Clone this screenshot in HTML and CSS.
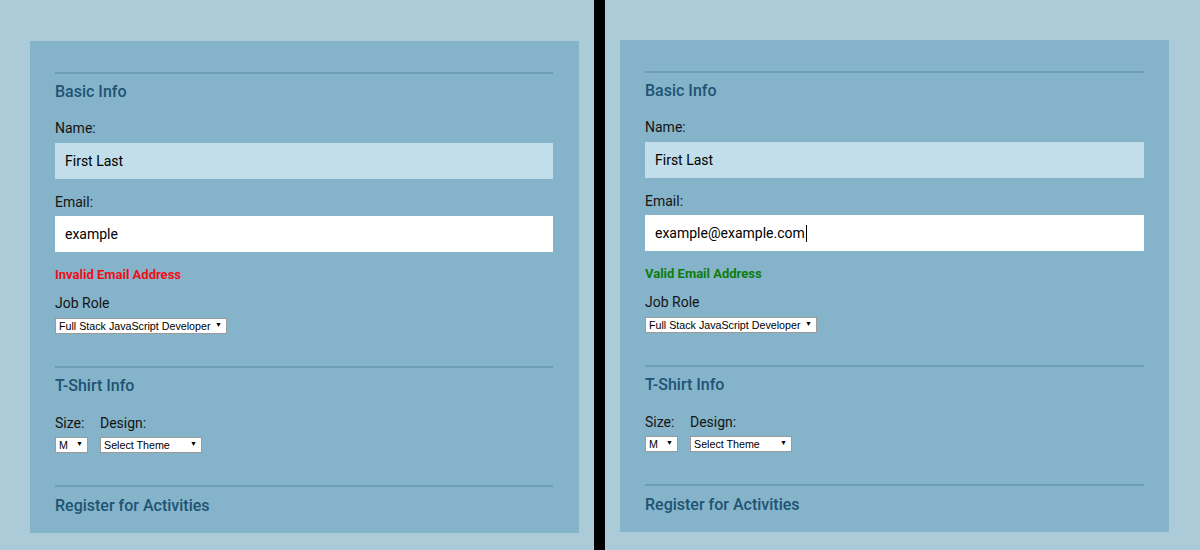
FILE: index.html
```html
<!DOCTYPE html>
<html lang="en">
<head>
<meta charset="utf-8">
<title>Form validation</title>
<link rel="stylesheet" href="styles.css">
</head>
<body>
<main class="split">
  <section class="panel panel-left">
    <form class="card">
      <fieldset class="group group-basic">
        <h2 class="legend">Basic Info</h2>
        <label class="label label-name">Name:</label>
        <div class="field field-name"><span>First Last</span></div>
        <label class="label label-email">Email:</label>
        <div class="field field-email"><span>example</span></div>
        <p class="msg msg-invalid">Invalid Email Address</p>
        <label class="label label-job">Job Role</label>
        <span class="select select-job"><select><option>Full Stack JavaScript Developer</option></select></span>
      </fieldset>
      <fieldset class="group group-shirt">
        <h2 class="legend">T-Shirt Info</h2>
        <div class="shirt">
          <div class="shirt-col">
            <label class="label">Size:</label>
            <span class="select select-size"><select><option>M</option></select></span>
          </div>
          <div class="shirt-col">
            <label class="label">Design:</label>
            <span class="select select-theme"><select><option>Select Theme</option></select></span>
          </div>
        </div>
      </fieldset>
      <fieldset class="group group-last">
        <h2 class="legend">Register for Activities</h2>
      </fieldset>
    </form>
  </section>
  <div class="divider"></div>
  <section class="panel panel-right">
    <form class="card">
      <fieldset class="group group-basic">
        <h2 class="legend">Basic Info</h2>
        <label class="label label-name">Name:</label>
        <div class="field field-name"><span>First Last</span></div>
        <label class="label label-email">Email:</label>
        <div class="field field-email"><span>example@example.com</span><span class="caret"></span></div>
        <p class="msg msg-valid">Valid Email Address</p>
        <label class="label label-job">Job Role</label>
        <span class="select select-job"><select><option>Full Stack JavaScript Developer</option></select></span>
      </fieldset>
      <fieldset class="group group-shirt">
        <h2 class="legend">T-Shirt Info</h2>
        <div class="shirt">
          <div class="shirt-col">
            <label class="label">Size:</label>
            <span class="select select-size"><select><option>M</option></select></span>
          </div>
          <div class="shirt-col">
            <label class="label">Design:</label>
            <span class="select select-theme"><select><option>Select Theme</option></select></span>
          </div>
        </div>
      </fieldset>
      <fieldset class="group group-last">
        <h2 class="legend">Register for Activities</h2>
      </fieldset>
    </form>
  </section>
</main>
</body>
</html>
```

FILE: styles.css
```css
html, body {
  margin: 0;
  padding: 0;
  height: 550px;
  overflow: hidden;
  background: #abcbd8;
  font-family: Roboto, "Liberation Sans", sans-serif;
}

.split {
  display: flex;
  height: 550px;
}

.panel {
  box-sizing: border-box;
  height: 550px;
}

.panel-left {
  width: 594px;
  padding: 41px 0 0 30px;
}

.panel-right {
  width: 595px;
  padding: 40px 0 0 15px;
}

.divider {
  width: 11px;
  height: 550px;
  background: #000;
}

.card {
  box-sizing: border-box;
  width: 549px;
  margin: 0;
  padding: 31px 26px 0 25px;
  height: 492px;
  background: #84b3ca;
}

.panel-right .card {
  padding-right: 25px;
}

.group {
  margin: 0;
  padding: 0;
  border: 0;
  border-top: 2px solid #6c9fb7;
  display: flex;
  flex-direction: column;
  align-items: flex-start;
}

.group-basic { padding-bottom: 32px; }
.group-shirt { padding-bottom: 32px; }
.group-last { padding-bottom: 0; }

.legend {
  margin: 8px 0 0;
  font-size: 16px;
  line-height: 20px;
  font-weight: 500;
  color: #1e5373;
}

.group-last .legend { margin-top: 9px; }

.label {
  display: block;
  margin-top: 17px;
  font-size: 14px;
  line-height: 18px;
  color: #141414;
}

.label-email { margin-top: 14px; }
.label-job { margin-top: 10px; }

.field {
  box-sizing: border-box;
  width: 100%;
  height: 36px;
  margin-top: 6px;
  padding-left: 10px;
  display: flex;
  align-items: center;
  font-size: 14px;
  color: #000;
}

.field-name { background: #c1deea; }
.field-email { background: #fff; margin-top: 5px; }

.caret {
  display: inline-block;
  width: 1px;
  height: 17px;
  margin-left: 1px;
  background: #000;
}

.msg {
  margin: 14px 0 0;
  font-size: 13px;
  line-height: 18px;
  font-weight: 700;
}

.msg-invalid { color: #f20d16; }
.msg-valid { color: #0d7d0d; }

.select {
  position: relative;
  display: inline-block;
  margin-top: 6px;
}

.select select {
  -webkit-appearance: none;
  appearance: none;
  box-sizing: border-box;
  display: block;
  width: 100%;
  height: 16px;
  margin: 0;
  padding: 0 12px 0 3px;
  border: 1px solid #9a9a9a;
  border-radius: 0;
  background: #fff;
  font-family: "Liberation Sans", Arial, sans-serif;
  font-size: 10.7px;
  line-height: 14px;
  color: #000;
}

.select::after {
  content: "\25BC";
  position: absolute;
  right: 5px;
  top: 3px;
  font-size: 7px;
  line-height: 9px;
  color: #000;
  pointer-events: none;
}

.select-job { width: 172px; }
.select-size { width: 33px; }
.select-theme { width: 102px; }

.shirt {
  display: flex;
  gap: 12px;
}

.shirt-col {
  display: flex;
  flex-direction: column;
  align-items: flex-start;
}

.shirt-col .label {
  margin-top: 18px;
}

.shirt-col .select {
  margin-top: 5px;
}
```
